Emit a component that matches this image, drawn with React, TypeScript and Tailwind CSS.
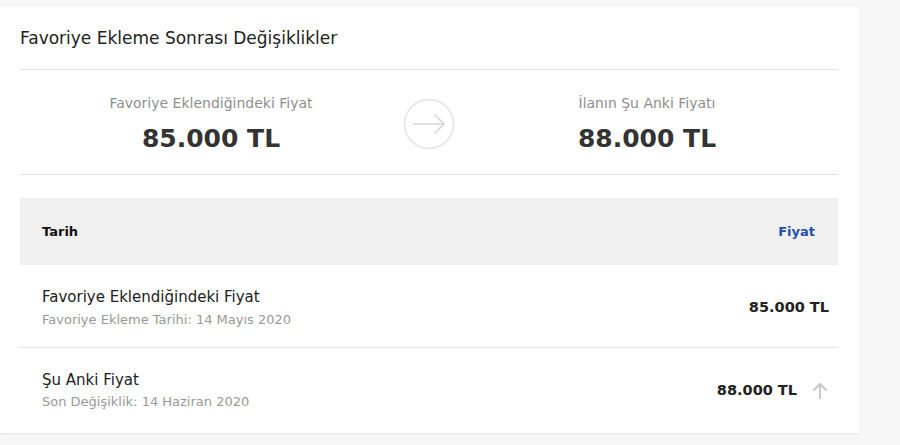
import React from "react";

function CircleArrow() {
  return (
    <svg width="52" height="52" viewBox="0 0 52 52" fill="none">
      <circle cx="26" cy="26" r="24.5" stroke="#e4e4e4" strokeWidth="1.5" />
      <path d="M10.5 26 H41" stroke="#d6d6d6" strokeWidth="1.6" strokeLinecap="round" />
      <path d="M32 17 L41 26 L32 35" stroke="#d6d6d6" strokeWidth="1.6" strokeLinecap="round" strokeLinejoin="round" />
    </svg>
  );
}

function UpArrow() {
  return (
    <svg width="16" height="17" viewBox="0 0 16 17" fill="none">
      <path d="M8 2 V16.5" stroke="#c9c9c9" strokeWidth="2" strokeLinecap="round" />
      <path d="M2 8 L8 2 L14 8" stroke="#c9c9c9" strokeWidth="2" strokeLinecap="round" strokeLinejoin="round" />
    </svg>
  );
}

export default function App() {
  return (
    <div
      className="w-[900px] h-[445px] bg-[#f7f7f7] pt-[7px] overflow-hidden"
      style={{ fontFamily: '"DejaVu Sans", Verdana, sans-serif' }}
    >
      <div className="w-[860px] h-[426px] bg-white shadow-[0_1px_2px_rgba(0,0,0,0.08)] flex flex-col">
        <div className="px-5 pt-[19px] pb-[19px] text-[17px] leading-[24px] text-[#222]">
          Favoriye Ekleme Sonrası Değişiklikler
        </div>
        <div className="ml-5 mr-[22px] h-px bg-[#e3e3e3]" />

        <div className="ml-5 mr-[22px] grid grid-cols-[1fr_54px_1fr] items-center pt-[23px] pb-[19px]">
          <div className="flex flex-col items-center">
            <div className="text-[14px] leading-[20px] text-[#8f8f8f]">Favoriye Eklendiğindeki Fiyat</div>
            <div className="mt-[10px] text-[25px] leading-[32px] font-bold text-[#333]">85.000 TL</div>
          </div>
          <div className="flex justify-center">
            <CircleArrow />
          </div>
          <div className="flex flex-col items-center">
            <div className="text-[14px] leading-[20px] text-[#8f8f8f]">İlanın Şu Anki Fiyatı</div>
            <div className="mt-[10px] text-[25px] leading-[32px] font-bold text-[#333]">88.000 TL</div>
          </div>
        </div>
        <div className="ml-5 mr-[22px] h-px bg-[#e3e3e3]" />

        <div className="ml-5 mr-[22px] mt-[23px]">
          <div className="h-[67px] bg-[#f0f0f0] flex items-center justify-between pl-[22px] pr-[23px] text-[13px] font-bold">
            <span className="text-[#111]">Tarih</span>
            <span className="text-[#2450a8]">Fiyat</span>
          </div>

          <div className="h-[82px] flex items-center justify-between pl-[22px] pr-[9px]">
            <div className="pt-[4px] flex flex-col">
              <span className="text-[15px] leading-[20px] text-[#222]">Favoriye Eklendiğindeki Fiyat</span>
              <span className="mt-[4px] text-[13px] leading-[18px] text-[#999]">Favoriye Ekleme Tarihi: 14 Mayıs 2020</span>
            </div>
            <span className="pt-[3px] text-[14.5px] font-bold text-[#222]">85.000 TL</span>
          </div>
          <div className="h-px bg-[#e3e3e3]" />

          <div className="h-[85px] flex items-center justify-between pl-[22px] pr-[10px]">
            <div className="flex flex-col">
              <span className="text-[15px] leading-[20px] text-[#222]">Şu Anki Fiyat</span>
              <span className="mt-[3px] text-[13px] leading-[18px] text-[#999]">Son Değişiklik: 14 Haziran 2020</span>
            </div>
            <div className="flex items-center gap-[15px]">
              <span className="text-[14.5px] font-bold text-[#222]">88.000 TL</span>
              <UpArrow />
            </div>
          </div>
        </div>
      </div>
    </div>
  );
}
